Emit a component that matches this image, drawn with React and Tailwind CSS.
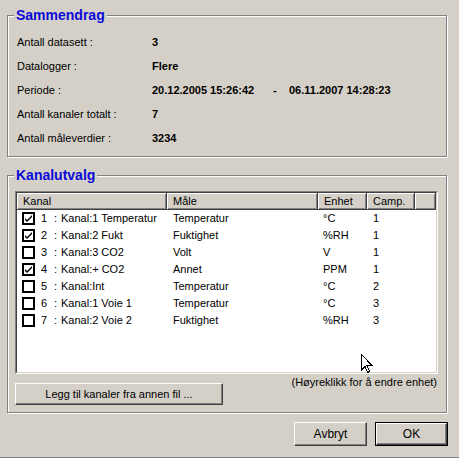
import React from "react";

const summary = [
  { label: "Antall datasett :", value: "3" },
  { label: "Datalogger :", value: "Flere" },
  { label: "Periode :", value: "20.12.2005 15:26:42", to: "06.11.2007 14:28:23" },
  { label: "Antall kanaler totalt :", value: "7" },
  { label: "Antall måleverdier :", value: "3234" },
];

const channels = [
  { n: 1, name: "Kanal:1 Temperatur", male: "Temperatur", unit: "°C", camp: 1, on: true },
  { n: 2, name: "Kanal:2 Fukt", male: "Fuktighet", unit: "%RH", camp: 1, on: true },
  { n: 3, name: "Kanal:3 CO2", male: "Volt", unit: "V", camp: 1, on: false },
  { n: 4, name: "Kanal:+ CO2", male: "Annet", unit: "PPM", camp: 1, on: true },
  { n: 5, name: "Kanal:Int", male: "Temperatur", unit: "°C", camp: 2, on: false },
  { n: 6, name: "Kanal:1 Voie 1", male: "Temperatur", unit: "°C", camp: 3, on: false },
  { n: 7, name: "Kanal:2 Voie 2", male: "Fuktighet", unit: "%RH", camp: 3, on: false },
];

const raised =
  "border border-t-white border-l-white border-b-[#404040] border-r-[#404040] shadow-[inset_-1px_-1px_#808080]";

const GroupBox = ({ title, className, children }) => (
  <div
    className={`relative ml-[7px] w-[440px] border border-[#808080] shadow-[inset_1px_1px_white,1px_1px_white] ${className}`}
  >
    <span className="absolute left-[6px] top-[-9px] bg-[#d4d0c8] px-[2px] text-[14px] font-bold leading-[16px] text-[#0a0ad8]">
      {title}
    </span>
    {children}
  </div>
);

const Check = ({ on }) => (
  <div className="flex h-[13px] w-[13px] items-center justify-center border-2 border-black bg-white">
    {on && (
      <svg width="9" height="9" viewBox="0 0 9 9">
        <path d="M1 4 L3 6 L8 1 L8 3 L3 8 L1 6 Z" fill="black" />
      </svg>
    )}
  </div>
);

const HeaderCell = ({ w, children }) => (
  <div
    className={`flex h-[17px] items-center border-r border-b border-r-[#404040] border-b-[#404040] pl-[6px] shadow-[inset_1px_1px_white,inset_-1px_-1px_#808080] ${w}`}
  >
    {children}
  </div>
);

export default function App() {
  return (
    <div
      className="relative h-[458px] w-[459px] border-b border-[#808080] bg-[#d4d0c8] pt-[15px] text-[11px] leading-[13px] text-black"
      style={{ fontFamily: '"Liberation Sans", Arial, sans-serif' }}
    >
      <GroupBox title="Sammendrag" className="h-[142px] pt-[14px] pl-[9px]">
        {summary.map((row) => (
          <div key={row.label} className="flex h-[24px] items-center">
            <div className="w-[135px]">{row.label}</div>
            <div className="w-[121px] font-bold">{row.value}</div>
            {row.to && (
              <>
                <div className="w-[16px] font-bold">-</div>
                <div className="font-bold">{row.to}</div>
              </>
            )}
          </div>
        ))}
      </GroupBox>

      <GroupBox title="Kanalutvalg" className="mt-[18px] h-[238px] pt-[15px] pl-[7px]">
        <div className="flex h-[183px] w-[423px] flex-col border border-t-[#808080] border-l-[#808080] border-b-white border-r-white">
          <div className="flex flex-1 flex-col overflow-hidden border border-t-[#404040] border-l-[#404040] border-b-[#d4d0c8] border-r-[#d4d0c8] bg-white">
            <div className="flex bg-[#d4d0c8]">
              <HeaderCell w="w-[150px]">Kanal</HeaderCell>
              <HeaderCell w="w-[151px]">Måle</HeaderCell>
              <HeaderCell w="w-[49px]">Enhet</HeaderCell>
              <HeaderCell w="w-[48px]">Camp.</HeaderCell>
              <HeaderCell w="flex-1"></HeaderCell>
            </div>
            {channels.map((c) => (
              <div key={c.n} className="flex h-[17px] items-center">
                <div className="flex w-[150px] items-center pl-[5px]">
                  <Check on={c.on} />
                  <span className="ml-[6px] w-[13px]">{c.n}</span>
                  <span className="w-[7px]">:</span>
                  <span>{c.name}</span>
                </div>
                <div className="w-[151px] pl-[6px]">{c.male}</div>
                <div className="w-[49px] pl-[5px]">{c.unit}</div>
                <div className="w-[48px] pl-[6px]">{c.camp}</div>
              </div>
            ))}
          </div>
        </div>
        <div className="flex w-[423px] items-start justify-between">
          <button
            className={`mt-[9px] flex h-[22px] w-[208px] items-center justify-center bg-[#d4d0c8] ${raised}`}
          >
            Legg til kanaler fra annen fil ...
          </button>
          <span className="mt-[2px] pr-[1px]">(Høyreklikk for å endre enhet)</span>
        </div>
      </GroupBox>

      <div className="mt-[9px] flex justify-end gap-[8px] pr-[11px]">
        <button className={`flex h-[24px] w-[73px] items-center justify-center bg-[#d4d0c8] text-[12px] ${raised}`}>
          Avbryt
        </button>
        <div className="border border-black">
          <button className={`flex h-[22px] w-[71px] items-center justify-center bg-[#d4d0c8] text-[12px] ${raised}`}>
            OK
          </button>
        </div>
      </div>

      <svg
        className="absolute left-[361px] top-[354px]"
        width="12"
        height="20"
        viewBox="0 0 12 20"
      >
        <path
          d="M0.5 0.5 L0.5 16 L4 12.5 L6.5 18.5 L8.5 17.5 L6 11.5 L11 11.5 Z"
          fill="white"
          stroke="black"
          strokeWidth="1"
          shapeRendering="crispEdges"
        />
      </svg>
    </div>
  );
}
